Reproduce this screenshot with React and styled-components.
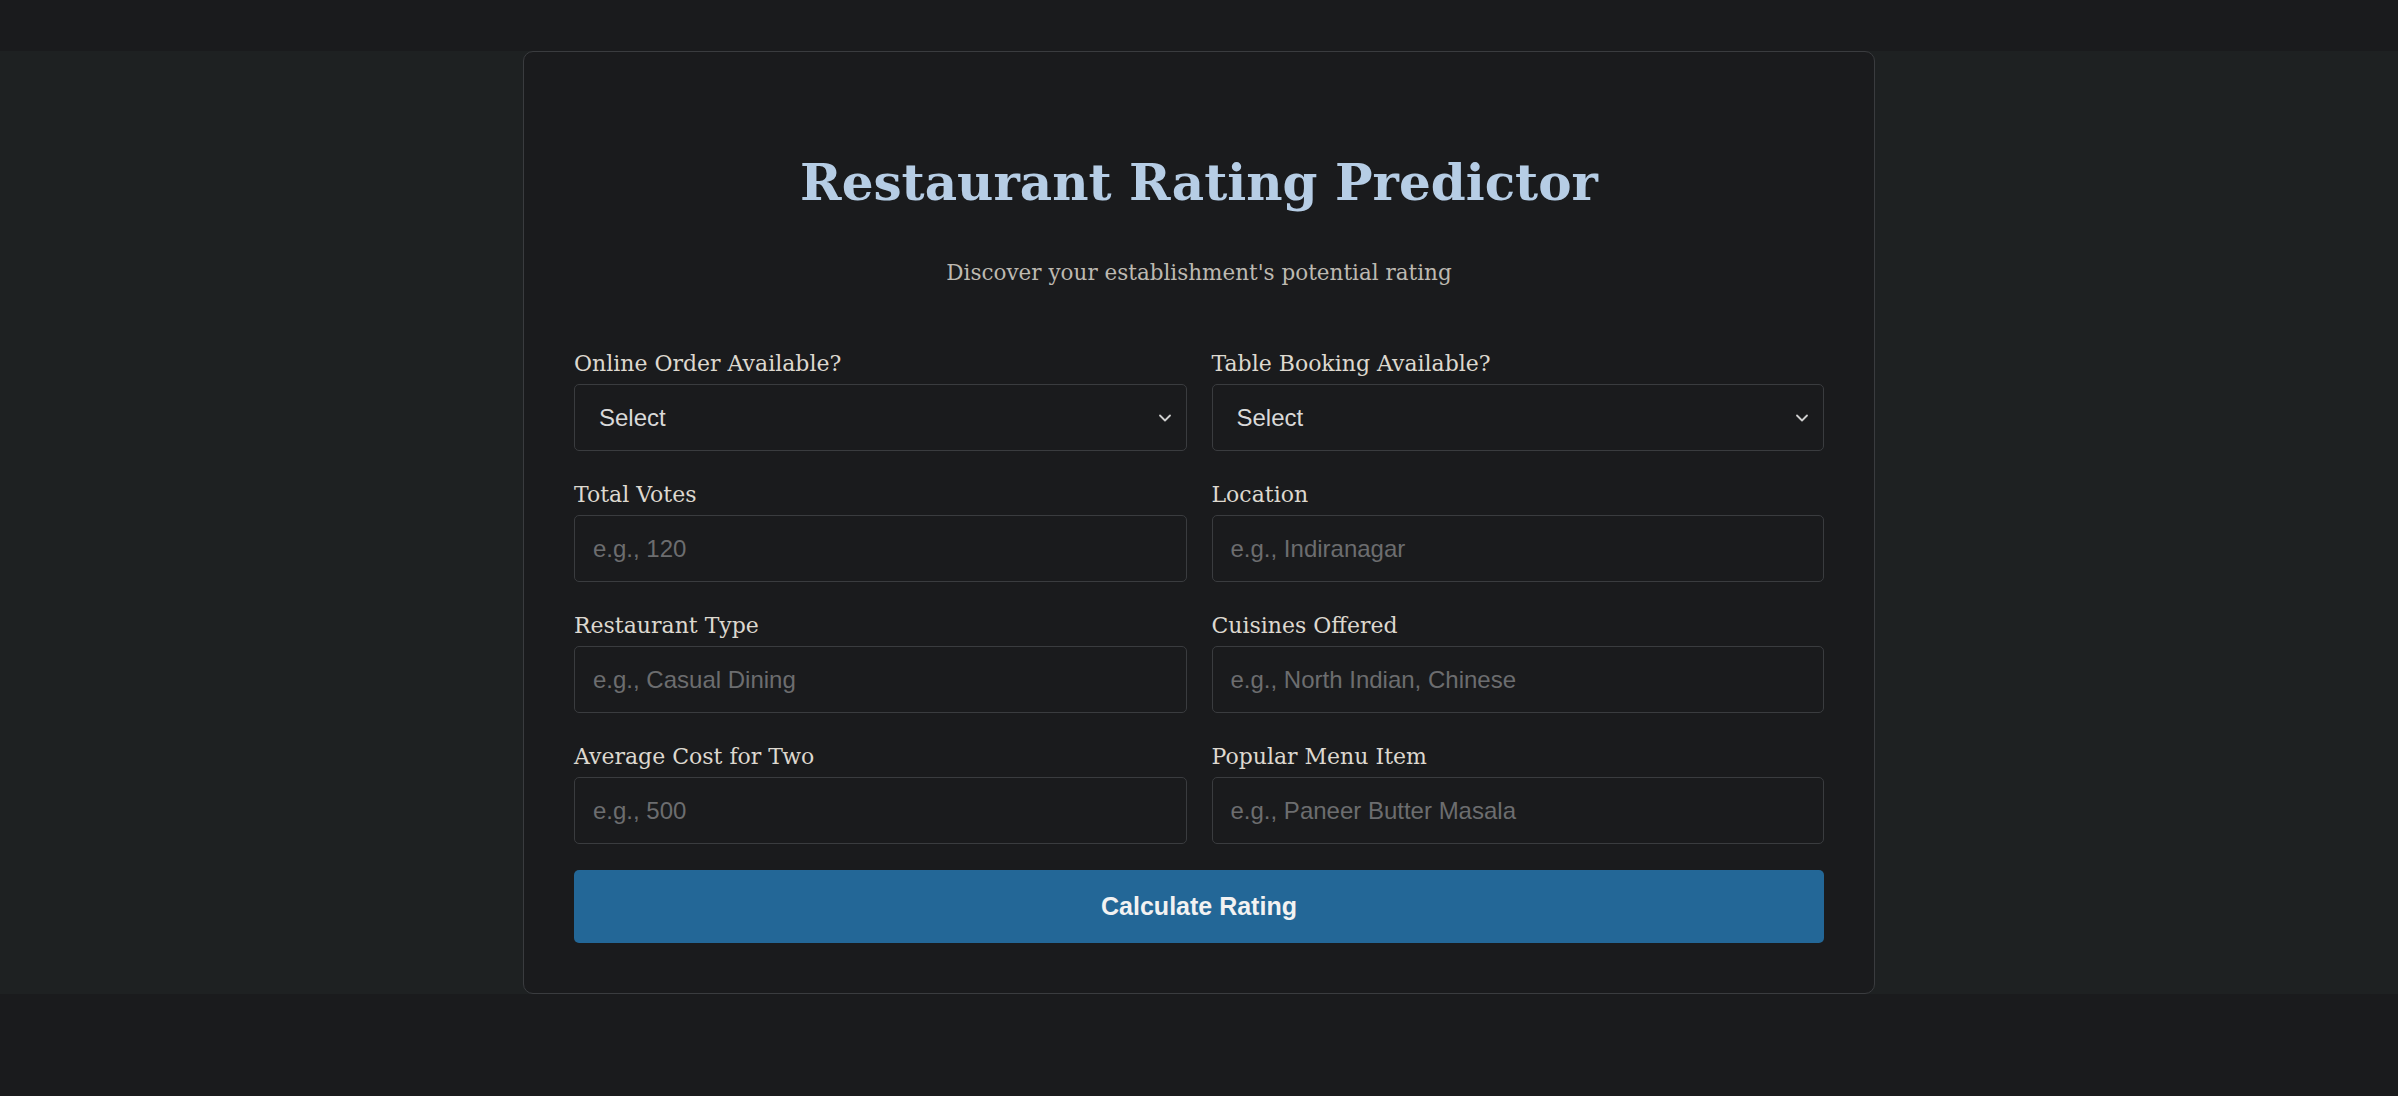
import React from 'react';
import styled, { createGlobalStyle } from 'styled-components';
import { ChevronDown } from 'lucide-react';

const GlobalStyle = createGlobalStyle`
	html, body {
		margin: 0;
		padding: 0;
		background: #1a1b1d;
	}
	* {
		box-sizing: border-box;
	}
`;

const Page = styled.div`
	padding-top: 51px;
	min-height: 1096px;
	background: #1a1b1d;
`;

const Band = styled.main`
	display: flex;
	justify-content: center;
	background: #1e2122;
`;

const Card = styled.section`
	width: 1352px;
	padding: 50px 50px 50px;
	background: #1a1b1d;
	border: 1px solid #3a3c3f;
	border-radius: 10px;
`;

const Title = styled.h1`
	margin: 50px 0 0;
	text-align: center;
	font-family: 'DejaVu Serif', Georgia, serif;
	font-weight: 700;
	font-size: 50px;
	line-height: 62px;
	color: #b6cde5;
`;

const Subtitle = styled.p`
	margin: 44px 0 62px;
	text-align: center;
	font-family: 'DejaVu Serif', Georgia, serif;
	font-size: 21.5px;
	line-height: 30px;
	color: #bdb9b1;
`;

const Grid = styled.div`
	display: grid;
	grid-template-columns: 1fr 1fr;
	column-gap: 25px;
	row-gap: 30px;
`;

const Field = styled.div`
	display: flex;
	flex-direction: column;
`;

const Label = styled.label`
	margin-bottom: 6px;
	font-family: 'DejaVu Serif', Georgia, serif;
	font-size: 22px;
	line-height: 28px;
	color: #ddd8cf;
`;

const controlStyles = `
	width: 100%;
	height: 67px;
	padding: 0 18px;
	background: #1a1b1d;
	border: 1px solid #3a3c3f;
	border-radius: 5px;
	font-family: 'Liberation Sans', Arial, sans-serif;
	font-size: 24px;
	outline: none;
`;

const Input = styled.input`
	${controlStyles}
	color: #e2e2e2;

	&::placeholder {
		color: #6c6d6f;
	}
`;

const SelectWrap = styled.div`
	position: relative;

	svg {
		position: absolute;
		right: 12px;
		top: 50%;
		transform: translateY(-50%);
		pointer-events: none;
		color: #cfcfcf;
	}
`;

const Select = styled.select`
	${controlStyles}
	appearance: none;
	padding-left: 24px;
	color: #d9d9d9;
`;

const SubmitButton = styled.button`
	width: 100%;
	height: 73px;
	margin-top: 26px;
	background: #236797;
	border: none;
	border-radius: 5px;
	font-family: 'Liberation Sans', Arial, sans-serif;
	font-weight: 700;
	font-size: 25px;
	color: #f2f2f2;
	cursor: pointer;
`;

const fields = [
	{ id: 'online', label: 'Online Order Available?', select: true },
	{ id: 'booking', label: 'Table Booking Available?', select: true },
	{ id: 'votes', label: 'Total Votes', placeholder: 'e.g., 120' },
	{ id: 'location', label: 'Location', placeholder: 'e.g., Indiranagar' },
	{ id: 'type', label: 'Restaurant Type', placeholder: 'e.g., Casual Dining' },
	{ id: 'cuisines', label: 'Cuisines Offered', placeholder: 'e.g., North Indian, Chinese' },
	{ id: 'cost', label: 'Average Cost for Two', placeholder: 'e.g., 500' },
	{ id: 'dish', label: 'Popular Menu Item', placeholder: 'e.g., Paneer Butter Masala' },
];

export default function App() {
	return (
		<Page>
			<GlobalStyle />
			<Band>
				<Card>
					<Title>Restaurant Rating Predictor</Title>
					<Subtitle>Discover your establishment's potential rating</Subtitle>
					<form onSubmit={(e) => e.preventDefault()}>
						<Grid>
							{fields.map(({ id, label, select, placeholder }) => (
								<Field key={id}>
									<Label htmlFor={id}>{label}</Label>
									{select ? (
										<SelectWrap>
											<Select id={id} defaultValue="">
												<option value="">Select</option>
												<option value="yes">Yes</option>
												<option value="no">No</option>
											</Select>
											<ChevronDown size={20} strokeWidth={2.2} />
										</SelectWrap>
									) : (
										<Input id={id} type="text" placeholder={placeholder} />
									)}
								</Field>
							))}
						</Grid>
						<SubmitButton type="submit">Calculate Rating</SubmitButton>
					</form>
				</Card>
			</Band>
		</Page>
	);
}
